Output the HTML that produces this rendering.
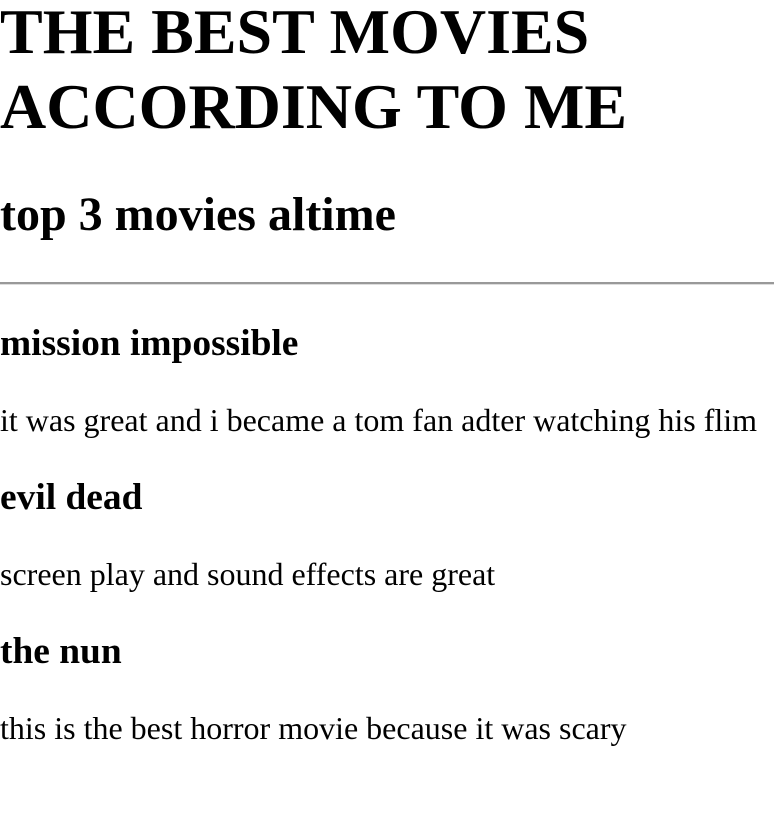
<!DOCTYPE html>
<html><head><meta charset="utf-8"><style>
body{margin:0;font-family:"Liberation Serif",serif;color:#000;background:#fff;}
h1{font-size:64px;line-height:75px;margin:-6px 0 0;font-weight:bold;}
h2{font-size:48px;margin:43px 0 40px;font-weight:bold;}
hr{margin:16px 0 18px;width:774px;border:0;border-top:2px solid #999;border-bottom:1px solid #ddd;}
h3{font-size:37.44px;margin:37px 0;font-weight:bold;}
p{font-size:32px;margin:32px 0;}
</style></head><body>
<h1>THE BEST MOVIES ACCORDING TO ME</h1>
<h2>top 3 movies altime</h2>
<hr>
<h3>mission impossible</h3>
<p>it was great and i became a tom fan adter watching his flim</p>
<h3>evil dead</h3>
<p>screen play and sound effects are great</p>
<h3>the nun</h3>
<p>this is the best horror movie because it was scary</p>
</body></html>
